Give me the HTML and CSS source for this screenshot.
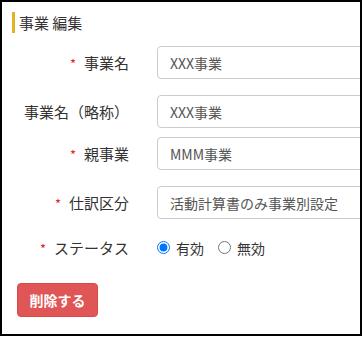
FILE: index.html
```html
<!DOCTYPE html>
<html lang="ja">
<head>
  <meta charset="UTF-8" />
  <title>事業 編集</title>
  <link rel="stylesheet" href="styles.css">
</head>
<body>
  <div class="panel">
    <h2 class="title">事業 編集</h2>

    <div class="form">
      <div class="row">
        <label class="label"><span class="req">*</span>事業名</label>
        <input class="input" type="text" value="XXX事業">
      </div>
      <div class="row short">
        <label class="label">事業名（略称）</label>
        <input class="input" type="text" value="XXX事業">
      </div>
      <div class="row">
        <label class="label"><span class="req">*</span>親事業</label>
        <input class="input" type="text" value="MMM事業">
      </div>
      <div class="row">
        <label class="label"><span class="req">*</span>仕訳区分</label>
        <input class="input" type="text" value="活動計算書のみ事業別設定">
      </div>
      <div class="row status">
        <label class="label"><span class="req">*</span>ステータス</label>
        <div class="radios">
          <label class="radio"><input type="radio" name="status" checked> 有効</label>
          <label class="radio"><input type="radio" name="status"> 無効</label>
        </div>
      </div>
    </div>

    <button class="btn-delete">削除する</button>
  </div>
</body>
</html>
```

FILE: styles.css
```css
body {
  margin: 0;
  padding: 0;
  font-family: "Noto Sans CJK JP", "Noto Sans", sans-serif;
  color: #333;
  background: #fff;
}

.panel {
  width: 362px;
  height: 336px;
  box-sizing: border-box;
  border: 2px solid #000;
  overflow: hidden;
  padding: 10px 0 0 10px;
}

.title {
  margin: 0;
  font-size: 15px;
  font-weight: normal;
  line-height: 21px;
  border-left: 3px solid #e0b425;
  padding-left: 4px;
}

.form {
  margin-top: 13px;
}

.row {
  display: grid;
  grid-template-columns: 117px 220px;
  column-gap: 28px;
  align-items: center;
  margin-bottom: 16px;
}

.row.short {
  margin-bottom: 9px;
}

.label {
  text-align: right;
  font-size: 15px;
  white-space: nowrap;
}

.req {
  color: #e0242b;
  margin-right: 8px;
  font-size: 13px;
}

.input {
  height: 33px;
  box-sizing: border-box;
  border: 1px solid #ccc;
  border-radius: 4px;
  padding: 0 12px;
  font-family: inherit;
  font-size: 14px;
  color: #555;
}

.status {
  margin-top: 18px;
  margin-bottom: 25px;
}

.radios {
  display: flex;
  gap: 14px;
  font-size: 14px;
}

.radio {
  display: flex;
  align-items: center;
  gap: 6px;
}

.radio input {
  margin: 0;
  width: 13px;
  height: 13px;
}

.btn-delete {
  margin-left: 5px;
  width: 81px;
  height: 34px;
  background: #e05555;
  color: #fff;
  border: 1px solid #d84a4a;
  border-radius: 4px;
  font-family: inherit;
  font-size: 14px;
  font-weight: bold;
}
```
